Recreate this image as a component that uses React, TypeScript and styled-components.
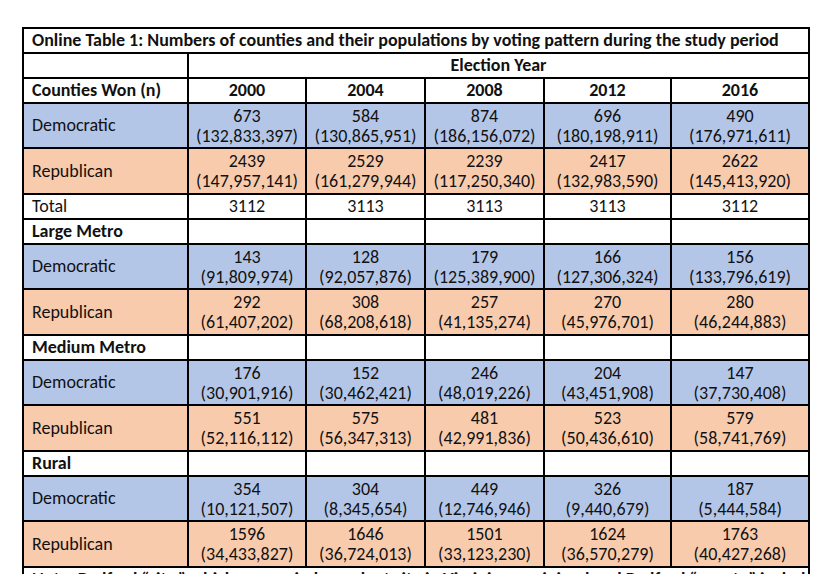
import React from "react";
import styled, { createGlobalStyle } from "styled-components";

const Global = createGlobalStyle`
  html, body { margin: 0; padding: 0; background: #ffffff; }
  body { font-family: Carlito, Lato, "Open Sans", "Liberation Sans", sans-serif; color: #111; }
`;

const Page = styled.div`
  padding: 27px 0 0 22px;
`;

const Table = styled.table`
  border-collapse: collapse;
  table-layout: fixed;
  width: 786px;
  font-size: 18px;
  line-height: 21px;
`;

type Tone = "blue" | "orange" | "white";

const bg: Record<Tone, string> = {
  blue: "#b4c6e7",
  orange: "#f8cbad",
  white: "#ffffff",
};

const Cell = styled.td<{ $tone?: Tone; $bold?: boolean; $left?: boolean; $h?: number }>`
  border: 2px solid #000;
  background: ${(p) => bg[p.$tone ?? "white"]};
  font-weight: ${(p) => (p.$bold ? 700 : 400)};
  text-align: ${(p) => (p.$left ? "left" : "center")};
  padding: ${(p) => (p.$left ? "0 0 0 8px" : "0")};
  height: ${(p) => p.$h ?? 23}px;
  vertical-align: middle;
  white-space: nowrap;
  overflow: hidden;
`;

const Num = styled.div`
  line-height: 20px;
`;

const years = ["2000", "2004", "2008", "2012", "2016"];
const widths = [165, 118, 119, 119, 127, 138];

type Row = { label: string; tone: Tone; vals: [string, string][] };
type Section = { title?: string; rows: Row[]; total?: string[] };

const sections: Section[] = [
  {
    rows: [
      {
        label: "Democratic",
        tone: "blue",
        vals: [
          ["673", "(132,833,397)"],
          ["584", "(130,865,951)"],
          ["874", "(186,156,072)"],
          ["696", "(180,198,911)"],
          ["490", "(176,971,611)"],
        ],
      },
      {
        label: "Republican",
        tone: "orange",
        vals: [
          ["2439", "(147,957,141)"],
          ["2529", "(161,279,944)"],
          ["2239", "(117,250,340)"],
          ["2417", "(132,983,590)"],
          ["2622", "(145,413,920)"],
        ],
      },
    ],
    total: ["3112", "3113", "3113", "3113", "3112"],
  },
  {
    title: "Large Metro",
    rows: [
      {
        label: "Democratic",
        tone: "blue",
        vals: [
          ["143", "(91,809,974)"],
          ["128", "(92,057,876)"],
          ["179", "(125,389,900)"],
          ["166", "(127,306,324)"],
          ["156", "(133,796,619)"],
        ],
      },
      {
        label: "Republican",
        tone: "orange",
        vals: [
          ["292", "(61,407,202)"],
          ["308", "(68,208,618)"],
          ["257", "(41,135,274)"],
          ["270", "(45,976,701)"],
          ["280", "(46,244,883)"],
        ],
      },
    ],
  },
  {
    title: "Medium Metro",
    rows: [
      {
        label: "Democratic",
        tone: "blue",
        vals: [
          ["176", "(30,901,916)"],
          ["152", "(30,462,421)"],
          ["246", "(48,019,226)"],
          ["204", "(43,451,908)"],
          ["147", "(37,730,408)"],
        ],
      },
      {
        label: "Republican",
        tone: "orange",
        vals: [
          ["551", "(52,116,112)"],
          ["575", "(56,347,313)"],
          ["481", "(42,991,836)"],
          ["523", "(50,436,610)"],
          ["579", "(58,741,769)"],
        ],
      },
    ],
  },
  {
    title: "Rural",
    rows: [
      {
        label: "Democratic",
        tone: "blue",
        vals: [
          ["354", "(10,121,507)"],
          ["304", "(8,345,654)"],
          ["449", "(12,746,946)"],
          ["326", "(9,440,679)"],
          ["187", "(5,444,584)"],
        ],
      },
      {
        label: "Republican",
        tone: "orange",
        vals: [
          ["1596", "(34,433,827)"],
          ["1646", "(36,724,013)"],
          ["1501", "(33,123,230)"],
          ["1624", "(36,570,279)"],
          ["1763", "(40,427,268)"],
        ],
      },
    ],
  },
];

export default function App() {
  return (
    <Page>
      <Global />
      <Table>
        <colgroup>
          {widths.map((w, i) => (
            <col key={i} style={{ width: w }} />
          ))}
        </colgroup>
        <tbody>
          <tr>
            <Cell colSpan={6} $bold $left>
              Online Table 1: Numbers of counties and their populations by voting pattern during the study period
            </Cell>
          </tr>
          <tr>
            <Cell />
            <Cell colSpan={5} $bold>
              Election Year
            </Cell>
          </tr>
          <tr>
            <Cell $bold $left>
              Counties Won (n)
            </Cell>
            {years.map((y) => (
              <Cell key={y} $bold>
                {y}
              </Cell>
            ))}
          </tr>
          {sections.map((s, si) => (
            <React.Fragment key={si}>
              {s.title && (
                <tr>
                  <Cell $bold $left>
                    {s.title}
                  </Cell>
                  {years.map((y) => (
                    <Cell key={y} />
                  ))}
                </tr>
              )}
              {s.rows.map((r) => {
                const h = r.tone === "orange" ? 44 : 43;
                return (
                  <tr key={r.label}>
                    <Cell $left $tone={r.tone} $h={h}>
                      {r.label}
                    </Cell>
                    {r.vals.map(([n, p], i) => (
                      <Cell key={i} $tone={r.tone} $h={h}>
                        <Num>{n}</Num>
                        <Num>{p}</Num>
                      </Cell>
                    ))}
                  </tr>
                );
              })}
              {s.total && (
                <tr>
                  <Cell $left>Total</Cell>
                  {s.total.map((t, i) => (
                    <Cell key={i}>{t}</Cell>
                  ))}
                </tr>
              )}
            </React.Fragment>
          ))}
          <tr>
            <Cell colSpan={6} $left $bold>
              Note: Bedford “city,” which was an independent city in Virginia, was joined and Bedford “county” included
            </Cell>
          </tr>
        </tbody>
      </Table>
    </Page>
  );
}
